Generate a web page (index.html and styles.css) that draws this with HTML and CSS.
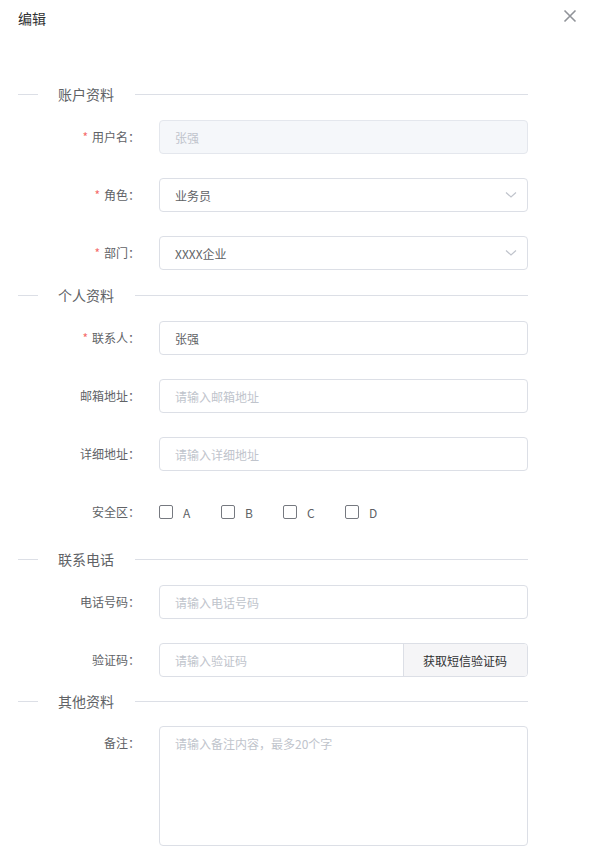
FILE: index.html
```html
<!DOCTYPE html>
<html lang="zh">
<head>
<meta charset="utf-8">
<title>编辑</title>
<link rel="stylesheet" href="styles.css">
</head>
<body>
<div class="dialog">
  <div class="header">
    <span class="title">编辑</span>
    <button class="close" aria-label="关闭">
      <svg width="14" height="14" viewBox="0 0 14 14"><path d="M1.5 1.5 L12.5 12.5 M12.5 1.5 L1.5 12.5" stroke="#909399" stroke-width="1.6" fill="none"/></svg>
    </button>
  </div>
  <form class="form">
    <section class="section">
      <div class="divider"><span class="divider-text">账户资料</span></div>
      <div class="item">
        <label class="label"><span class="req">*</span>用户名：</label>
        <div class="input disabled"><span class="value">张强</span></div>
      </div>
      <div class="item">
        <label class="label"><span class="req">*</span>角色：</label>
        <div class="input select"><span class="value">业务员</span><svg class="arrow" width="12" height="8" viewBox="0 0 12 8"><path d="M1 1.5 L6 6 L11 1.5" stroke="#c0c4cc" stroke-width="1.2" fill="none"/></svg></div>
      </div>
      <div class="item">
        <label class="label"><span class="req">*</span>部门：</label>
        <div class="input select"><span class="value">XXXX企业</span><svg class="arrow" width="12" height="8" viewBox="0 0 12 8"><path d="M1 1.5 L6 6 L11 1.5" stroke="#c0c4cc" stroke-width="1.2" fill="none"/></svg></div>
      </div>
    </section>
    <section class="section">
      <div class="divider"><span class="divider-text">个人资料</span></div>
      <div class="item">
        <label class="label"><span class="req">*</span>联系人：</label>
        <div class="input"><span class="value">张强</span></div>
      </div>
      <div class="item">
        <label class="label">邮箱地址：</label>
        <div class="input"><span class="ph">请输入邮箱地址</span></div>
      </div>
      <div class="item">
        <label class="label">详细地址：</label>
        <div class="input"><span class="ph">请输入详细地址</span></div>
      </div>
      <div class="item item-check">
        <label class="label">安全区：</label>
        <div class="checks">
          <span class="check"><span class="box"></span>A</span>
          <span class="check"><span class="box"></span>B</span>
          <span class="check"><span class="box"></span>C</span>
          <span class="check"><span class="box"></span>D</span>
        </div>
      </div>
    </section>
    <section class="section section-tight">
      <div class="divider"><span class="divider-text">联系电话</span></div>
      <div class="item">
        <label class="label">电话号码：</label>
        <div class="input"><span class="ph">请输入电话号码</span></div>
      </div>
      <div class="item">
        <label class="label">验证码：</label>
        <div class="input group"><span class="ph grow">请输入验证码</span><span class="append">获取短信验证码</span></div>
      </div>
    </section>
    <section class="section">
      <div class="divider divider-tight"><span class="divider-text">其他资料</span></div>
      <div class="item item-area">
        <label class="label">备注：</label>
        <div class="input textarea"><span class="ph">请输入备注内容，最多20个字</span></div>
      </div>
    </section>
  </form>
</div>
</body>
</html>
```

FILE: styles.css
```css
* { box-sizing: border-box; }
body {
  margin: 0;
  background: #fff;
  font-family: "Noto Sans CJK SC", "Microsoft YaHei", sans-serif;
  color: #606266;
}
.dialog {
  width: 598px;
  padding: 0 0 0 18px;
}
.header {
  height: 35px;
  display: flex;
  align-items: center;
  justify-content: space-between;
  padding-right: 20px;
}
.title {
  font-size: 14px;
  color: #303133;
}
.close {
  border: 0;
  background: none;
  padding: 0;
  width: 16px;
  height: 16px;
  display: flex;
  align-items: center;
  justify-content: center;
  margin-top: -4px;
}
.form {
  width: 510px;
  padding-top: 49px;
}
.section {
  margin-bottom: 15px;
}
.section-tight { margin-bottom: 14px; }
.divider {
  height: 20px;
  display: flex;
  align-items: center;
  margin-bottom: 16px;
  font-size: 14px;
  color: #606266;
}
.divider-tight { margin-bottom: 15px; }
.divider::before,
.divider::after {
  content: "";
  height: 1px;
  background: #dcdfe6;
}
.divider::before { width: 20px; }
.divider::after { flex: 1; }
.divider-text {
  padding: 0 21px 0 20px;
  line-height: 20px;
}
.item {
  display: flex;
  align-items: center;
  height: 34px;
  margin-bottom: 24px;
}
.item:last-child { margin-bottom: 0; }
.item-check:last-child { margin-bottom: 20px; }
.item-area {
  height: 120px;
  align-items: flex-start;
}
.label {
  width: 141px;
  flex: none;
  text-align: right;
  padding-right: 19px;
  font-size: 12px;
  color: #606266;
  line-height: 34px;
}
.req {
  color: #f56c6c;
  margin-right: 4px;
}
.input {
  flex: 1;
  height: 34px;
  border: 1px solid #dcdfe6;
  border-radius: 4px;
  display: flex;
  align-items: center;
  padding: 0 15px;
  font-size: 12px;
  background: #fff;
}
.input.disabled {
  background: #f5f7fa;
  border-color: #e4e7ed;
}
.input.disabled .value { color: #c0c4cc; }
.value { color: #606266; flex: 1; }
.ph { color: #c0c4cc; }
.grow { flex: 1; }
.select { padding-right: 10px; }
.arrow { flex: none; }
.group {
  padding-right: 0;
  overflow: hidden;
}
.append {
  height: 100%;
  display: flex;
  align-items: center;
  padding: 0 19px 0 19px;
  width: 124px;
  background: #f5f5f7;
  border-left: 1px solid #dcdfe6;
  color: #303133;
}
.textarea {
  height: 120px;
  align-items: flex-start;
  padding-top: 8px;
}
.checks {
  display: flex;
  align-items: center;
  font-size: 12px;
  color: #606266;
}
.check {
  display: flex;
  align-items: center;
  width: 62px;
}
.box {
  width: 14px;
  height: 14px;
  border: 1px solid #767980;
  border-radius: 2px;
  margin-right: 10px;
  background: #fff;
}
```
